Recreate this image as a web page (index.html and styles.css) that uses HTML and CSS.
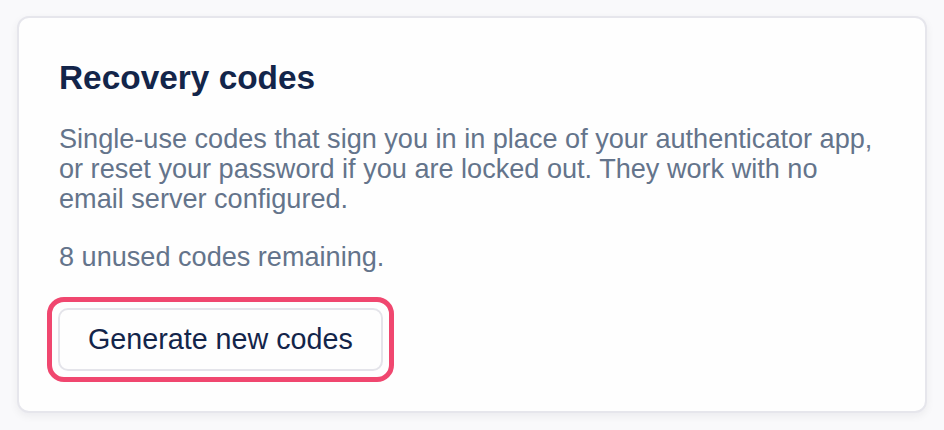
FILE: index.html
```html
<!DOCTYPE html>
<html>
<head>
    <title>Recovery codes</title>
    <meta name="viewport" content="width=device-width, initial-scale=1">
    <link rel="stylesheet" href="styles.css">
</head>
<body>
    <div class="card">
        <h2>Recovery codes</h2>
        <p class="muted">
            Single-use codes that sign you in in place of your authenticator app,
            or reset your password if you are locked out. They work with no
            email server configured.
        </p>
        <p class="muted count">8 unused codes remaining.</p>
        <div class="focus-ring">
            <button class="button">Generate new codes</button>
        </div>
    </div>
</body>
</html>
```

FILE: styles.css
```css
body {
    font-family: "Liberation Sans", Arial, sans-serif;
    margin: 0;
    padding: 16px 17px;
    background: #f9f9fb;
    color: #13254a;
}
.card {
    background: #fefefe;
    border: 2px solid #e6e6ec;
    border-radius: 12px;
    padding: 41px 40px 29px;
    box-shadow: 0 3px 8px rgba(20, 20, 40, 0.06);
}
h2 {
    font-size: 33.4px;
    line-height: 38px;
    font-weight: bold;
    margin: 0 0 27px;
    color: #13254a;
}
.muted {
    font-size: 27.1px;
    line-height: 30px;
    color: #64748b;
    margin: 0 0 28px;
}
.count {
    margin-bottom: 25px;
}
.focus-ring {
    display: inline-block;
    margin-left: -12px;
    padding: 6px;
    border: 5px solid #f0476f;
    border-radius: 17px;
}
.button {
    display: block;
    font-family: "Liberation Sans", Arial, sans-serif;
    font-size: 28.7px;
    line-height: 33px;
    color: #13254a;
    background: #fefefe;
    border: 2px solid #e4e4ea;
    border-radius: 10px;
    padding: 13px 28px;
    cursor: pointer;
}
```
